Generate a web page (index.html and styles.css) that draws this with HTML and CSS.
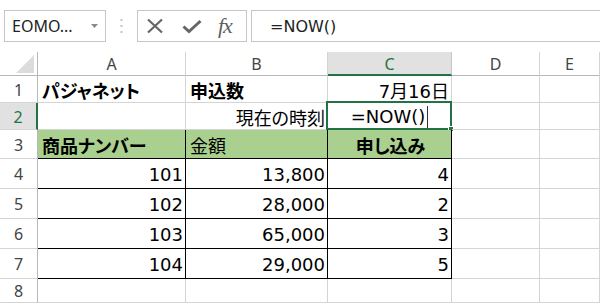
FILE: index.html
```html
<!DOCTYPE html>
<html lang="ja">
<head>
<meta charset="utf-8">
<link rel="stylesheet" href="styles.css">
</head>
<body>
<div class="app">
  <div class="fbar">
    <div class="namebox">
      <span class="nb-text">EOMO...</span>
      <svg class="nb-arrow" width="8" height="5" viewBox="0 0 8 5"><path d="M0 0 H7 L3.5 4 Z" fill="#8a8a8a"/></svg>
    </div>
    <div class="sep">
      <svg width="3" height="14" viewBox="0 0 3 14"><rect x="0.5" y="0" width="2" height="2" fill="#c4c4c4"/><rect x="0.5" y="6" width="2" height="2" fill="#c4c4c4"/><rect x="0.5" y="12" width="2" height="2" fill="#c4c4c4"/></svg>
    </div>
    <div class="fxbox">
      <svg class="ic" width="18" height="16" viewBox="0 0 18 16"><path d="M2 1.5 L16 14.5 M16 1.5 L2 14.5" stroke="#666" stroke-width="2.2" fill="none"/></svg>
      <svg class="ic" width="20" height="16" viewBox="0 0 20 16"><path d="M1.5 8.5 L7 13.5 L18.5 3" stroke="#666" stroke-width="3" fill="none" stroke-linejoin="miter"/></svg>
      <span class="fx">fx</span>
    </div>
    <div class="formula">=NOW()</div>
  </div>

  <div class="sheet">
    <div class="corner"><span class="tri"></span></div>
    <div class="ch">A</div>
    <div class="ch">B</div>
    <div class="ch ch-act">C</div>
    <div class="ch">D</div>
    <div class="ch">E</div>

    <div class="rh">1</div>
    <div class="c b">パジャネット</div>
    <div class="c b">申込数</div>
    <div class="c r">7月16日</div>
    <div class="c"></div>
    <div class="c"></div>

    <div class="rh rh-act">2</div>
    <div class="c"></div>
    <div class="c r">現在の時刻</div>
    <div class="c ctr act"><span class="edit">=NOW()</span><span class="caret"></span><span class="sel"><span class="handle"></span></span></div>
    <div class="c"></div>
    <div class="c"></div>

    <div class="rh">3</div>
    <div class="c g bx b">商品ナンバー</div>
    <div class="c g bx">金額</div>
    <div class="c g bx b ctr">申し込み</div>
    <div class="c"></div>
    <div class="c"></div>

    <div class="rh">4</div>
    <div class="c bx r">101</div>
    <div class="c bx r">13,800</div>
    <div class="c bx r">4</div>
    <div class="c"></div>
    <div class="c"></div>

    <div class="rh">5</div>
    <div class="c bx r">102</div>
    <div class="c bx r">28,000</div>
    <div class="c bx r">2</div>
    <div class="c"></div>
    <div class="c"></div>

    <div class="rh">6</div>
    <div class="c bx r">103</div>
    <div class="c bx r">65,000</div>
    <div class="c bx r">3</div>
    <div class="c"></div>
    <div class="c"></div>

    <div class="rh">7</div>
    <div class="c bx r">104</div>
    <div class="c bx r">29,000</div>
    <div class="c bx r">5</div>
    <div class="c"></div>
    <div class="c"></div>

    <div class="rh">8</div>
    <div class="c"></div>
    <div class="c"></div>
    <div class="c"></div>
    <div class="c"></div>
    <div class="c"></div>
  </div>
</div>
</body>
</html>
```

FILE: styles.css
```css
* { box-sizing: border-box; }
html, body { margin: 0; padding: 0; background: #fff; }
.app { width: 600px; height: 303px; overflow: hidden; }

.fbar {
  height: 52px;
  display: flex;
  align-items: flex-start;
  padding-top: 10px;
  padding-left: 4px;
}
.namebox {
  width: 102px;
  height: 32px;
  border: 1px solid #c6c6c6;
  display: flex;
  align-items: center;
  justify-content: space-between;
  padding: 0 6px 0 7px;
  font-family: "Noto Sans", "Liberation Sans", sans-serif;
  font-size: 16px;
  color: #222;
}
.nb-arrow { margin-top: 1px; }
.sep {
  width: 31px;
  height: 32px;
  display: flex;
  align-items: center;
  justify-content: center;
}
.fxbox {
  width: 110px;
  height: 32px;
  border: 1px solid #c6c6c6;
  display: flex;
  align-items: center;
  padding-left: 8px;
  gap: 18px;
}
.fxbox .ic { display: block; }
.fx {
  font-family: "Liberation Serif", "DejaVu Serif", serif;
  font-style: italic;
  font-size: 22px;
  color: #5f5f5f;
  margin-left: -2px;
  letter-spacing: -1px;
}
.formula {
  flex: 1;
  height: 32px;
  margin-left: 4px;
  border: 1px solid #c6c6c6;
  border-right: none;
  display: flex;
  align-items: center;
  padding-left: 18px;
  font-family: "DejaVu Sans", sans-serif;
  font-size: 16px;
  color: #222;
}

.sheet {
  display: grid;
  grid-template-columns: 38px 148px 142px 124px 88px 1fr;
  grid-template-rows: 24px 27px 27px 29px 30px 30px 30px 30px 24px;
  font-family: "DejaVu Sans", "Noto Sans CJK JP", sans-serif;
  font-feature-settings: "palt";
}
.corner {
  border-right: 1px solid #b8b8b8;
  border-bottom: 1px solid #b8b8b8;
  position: relative;
}
.tri {
  position: absolute;
  right: 3px;
  bottom: 2px;
  width: 0;
  height: 0;
  border-left: 18px solid transparent;
  border-bottom: 18px solid #dcdcdc;
}
.ch {
  border-right: 1px solid #d4d4d4;
  border-bottom: 1px solid #b8b8b8;
  display: flex;
  align-items: center;
  justify-content: center;
  font-family: "Noto Sans", "Liberation Sans", sans-serif;
  font-size: 16px;
  color: #444;
  padding-top: 1px;
}
.ch-act {
  background: #e1e1e1;
  color: #217346;
  border-bottom: 2px solid #217346;
  border-right-color: #c6c6c6;
}
.rh {
  border-right: 1px solid #b8b8b8;
  border-bottom: 1px solid #d4d4d4;
  display: flex;
  align-items: center;
  justify-content: center;
  font-family: "Noto Sans", "Liberation Sans", sans-serif;
  font-size: 16px;
  color: #444;
  padding-top: 1px;
}
.rh-act {
  background: #e1e1e1;
  color: #217346;
  border-right: 2px solid #217346;
}
.c {
  border-right: 1px solid #d4d4d4;
  border-bottom: 1px solid #d4d4d4;
  display: flex;
  align-items: center;
  padding: 1px 2px 0 4px;
  font-size: 18px;
  color: #000;
  white-space: nowrap;
  position: relative;
}
.r { justify-content: flex-end; }
.ctr { justify-content: center; }
.b { font-weight: bold; }
.g { background: #a9d08e; }
.bx { border-right-color: #000; border-bottom-color: #000; }

.act { padding-left: 2px; }
.caret {
  display: block;
  width: 1px;
  height: 22px;
  background: #333;
  margin-left: 2px;
}
.sel {
  position: absolute;
  top: -2px;
  left: -2px;
  right: -1px;
  bottom: -1px;
  border: 2px solid #217346;
  pointer-events: none;
}
.handle {
  position: absolute;
  right: -4px;
  bottom: -4px;
  width: 6px;
  height: 6px;
  background: #217346;
  border: 1px solid #fff;
}
```
